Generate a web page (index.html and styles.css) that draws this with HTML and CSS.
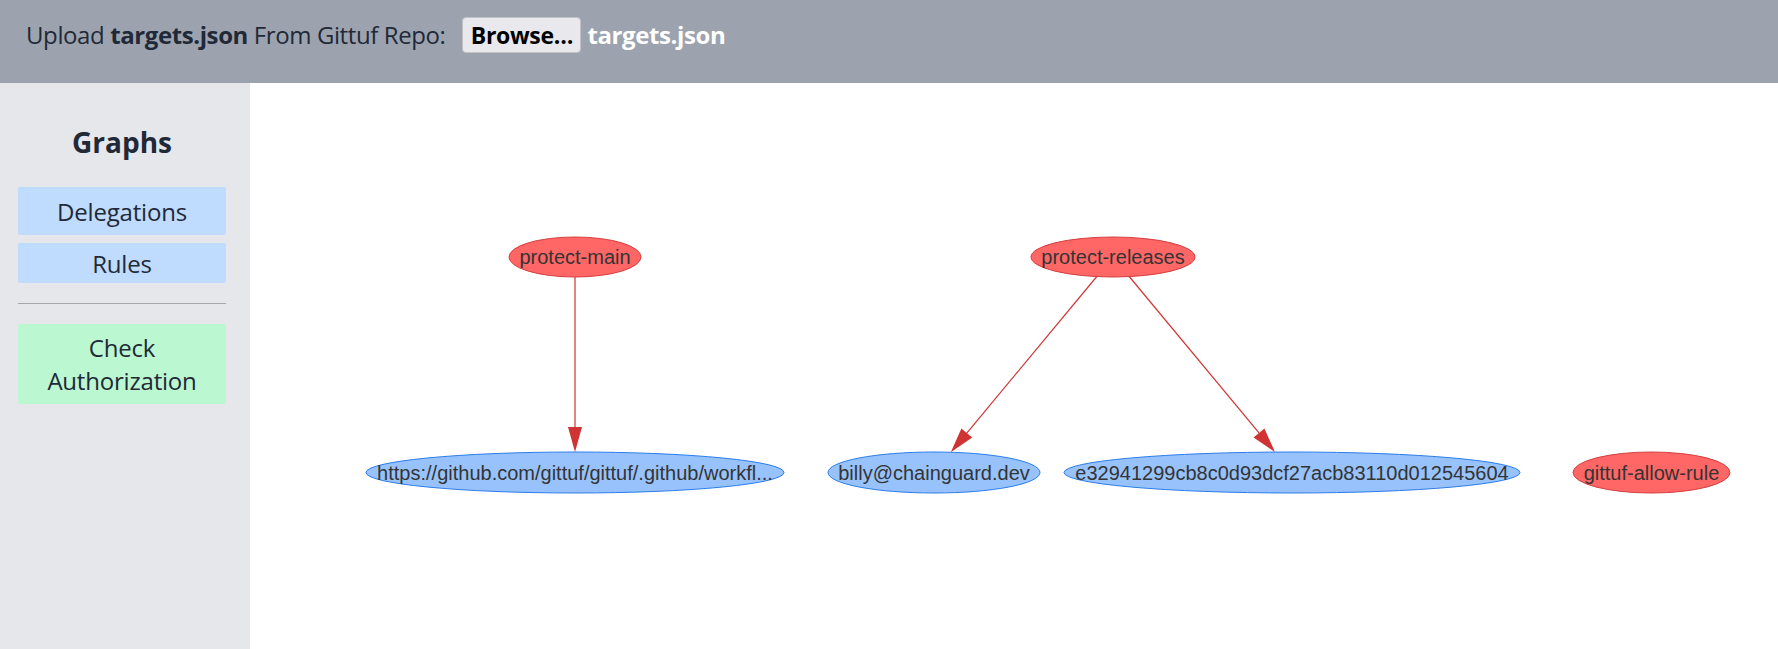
FILE: index.html
```html
<!DOCTYPE html>
<html lang="en">
<head>
<meta charset="utf-8">
<title>gittuf visualizer</title>
<link rel="stylesheet" href="styles.css">
</head>
<body>
<header class="topbar">
  <span class="upload-label">Upload <b>targets.json</b> From Gittuf Repo:</span>
  <span class="file-input">
    <button class="browse" type="button">Browse…</button>
    <span class="file-name">targets.json</span>
  </span>
</header>
<div class="layout">
  <aside class="sidebar">
    <h2 class="side-title">Graphs</h2>
    <button class="side-btn btn-blue btn-tall" type="button">Delegations</button>
    <button class="side-btn btn-blue btn-short" type="button">Rules</button>
    <hr class="divider">
    <button class="side-btn btn-green btn-multi" type="button">Check<br>Authorization</button>
  </aside>
  <main class="canvas">
    <svg class="graph" width="1528" height="566" viewBox="0 0 1528 566" xmlns="http://www.w3.org/2000/svg">
      <g class="edges">
        <line x1="325" y1="174" x2="325" y2="346" />
        <polygon points="325,369 318,344 332,344" />
        <line x1="863" y1="174" x2="716.8" y2="350.1" />
        <polygon points="700.8,369.3 711.4,345.6 722.2,354.5" />
        <line x1="863" y1="174" x2="1009" y2="349.9" />
        <polygon points="1025,369.1 1003.6,354.4 1014.4,345.4" />
      </g>
      <g class="nodes">
        <ellipse class="n-red" cx="325" cy="174" rx="66" ry="20" />
        <text x="325" y="174">protect-main</text>
        <ellipse class="n-red" cx="863" cy="174" rx="82" ry="20" />
        <text x="863" y="174">protect-releases</text>
        <ellipse class="n-blue" cx="325" cy="389.5" rx="209" ry="20.5" />
        <text x="325" y="389.5">https://github.com/gittuf/gittuf/.github/workfl...</text>
        <ellipse class="n-blue" cx="684" cy="389.5" rx="106" ry="20.5" />
        <text x="684" y="389.5">billy@chainguard.dev</text>
        <ellipse class="n-blue" cx="1042" cy="389.5" rx="228" ry="20.5" />
        <text x="1042" y="389.5">e32941299cb8c0d93dcf27acb83110d012545604</text>
        <ellipse class="n-red" cx="1401.5" cy="389.5" rx="78.5" ry="20.5" />
        <text x="1401.5" y="389.5">gittuf-allow-rule</text>
      </g>
    </svg>
  </main>
</div>
</body>
</html>
```

FILE: styles.css
```css
* { box-sizing: border-box; }
html, body { margin: 0; padding: 0; }
body {
  width: 1778px;
  height: 649px;
  overflow: hidden;
  font-family: "Open Sans", "Noto Sans", sans-serif;
  color: #1f2937;
  display: flex;
  flex-direction: column;
}
.topbar {
  height: 83px;
  flex: 0 0 83px;
  background: #9ca3af;
  display: flex;
  align-items: flex-start;
  padding: 17px 0 0 26px;
  font-size: 24px;
  letter-spacing: -0.4px;
}
.upload-label {
  line-height: 36px;
  color: #1f2937;
}
.upload-label b { font-weight: 700; }
.file-input {
  margin-left: 17px;
  display: flex;
  align-items: center;
  gap: 6px;
}
.browse {
  height: 36px;
  width: 119px;
  padding: 0;
  font: 700 23px "Open Sans", "Noto Sans", sans-serif;
  letter-spacing: -0.3px;
  color: #000;
  background: #e9e9ed;
  border: 1px solid #c2c2c8;
  border-radius: 4px;
}
.file-name {
  font-weight: 700;
  color: #fff;
  line-height: 36px;
}
.layout {
  flex: 1;
  display: flex;
  min-height: 0;
}
.sidebar {
  width: 250px;
  flex: 0 0 250px;
  background: #e5e7eb;
  padding: 0 24px 0 18px;
  display: flex;
  flex-direction: column;
}
.side-title {
  margin: 39px 0 0;
  height: 65px;
  text-align: center;
  font-size: 28px;
  font-weight: 700;
  line-height: 40px;
  color: #1f2937;
}
.side-btn {
  display: block;
  width: 100%;
  border: 0;
  border-radius: 2px;
  font: 400 24px/33px "Open Sans", "Noto Sans", sans-serif;
  letter-spacing: -0.2px;
  color: #1f2937;
  text-align: center;
  padding: 0;
}
.btn-blue { background: #bfdbfe; }
.btn-green { background: #bbf7d0; }
.btn-tall { height: 48px; }
.btn-short { height: 40px; margin-top: 8px; }
.btn-multi { height: 80px; }
.divider {
  margin: 20px 0 20px;
  border: 0;
  border-top: 1px solid #a3a6ac;
  height: 0;
}
.canvas {
  flex: 1;
  background: #fff;
  position: relative;
  overflow: hidden;
}
.graph { display: block; }
.edges line { stroke: #cf3333; stroke-width: 1.2; }
.edges polygon { fill: #cf3333; }
.n-red { fill: #ff6666; stroke: #d43f3f; stroke-width: 1; }
.n-blue { fill: #97c2fc; stroke: #2b7ce9; stroke-width: 1; }
.nodes text {
  font-family: "Liberation Sans", Arial, sans-serif;
  font-size: 20px;
  fill: #343434;
  text-anchor: middle;
  dominant-baseline: central;
}
```
